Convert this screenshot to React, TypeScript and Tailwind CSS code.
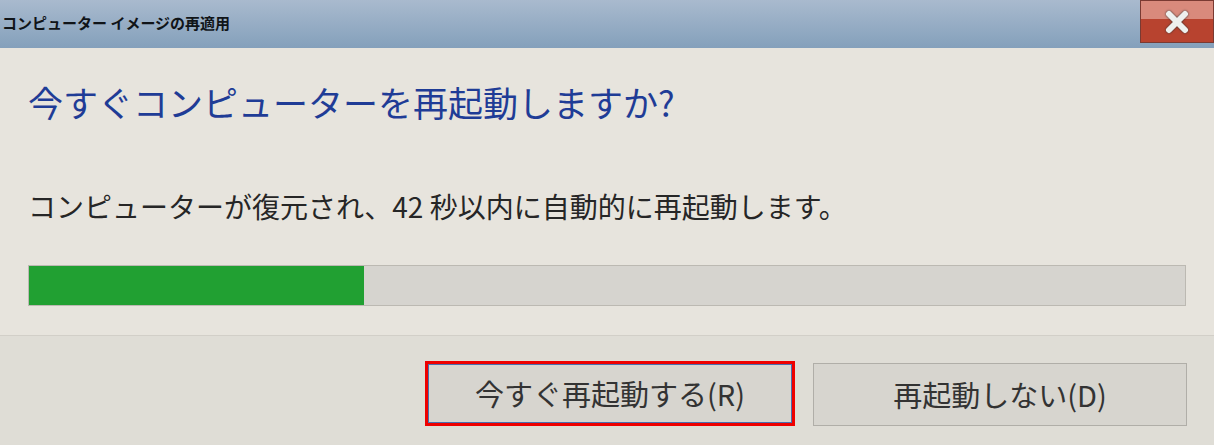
import { X } from "lucide-react";

const jp = "font-['Noto_Sans_CJK_JP',sans-serif]";

function TitleBar() {
  return (
    <div className="flex h-[48px] shrink-0 items-start justify-between bg-gradient-to-b from-[#a9bace] to-[#84a0bb]">
      <div className={`${jp} pl-[2px] pt-[13px] text-[15px] font-bold leading-[20px] text-[#101418]`}>
        コンピューター イメージの再適用
      </div>
      <div className="flex h-[43px] w-[74px] items-center justify-center border border-[#7a3a32] bg-gradient-to-b from-[#d98a7c] from-45% to-[#b8432f] to-45%">
        <X className="h-[32px] w-[32px] text-[#eef0ee] drop-shadow-[0_0_1px_#333]" strokeWidth={4.5} />
      </div>
    </div>
  );
}

export default function App() {
  const progress = 29;
  return (
    <div className={`${jp} flex h-[445px] w-[1214px] flex-col overflow-hidden bg-[#e7e4dd]`}>
      <TitleBar />
      <div className="flex flex-1 flex-col px-[28px] pt-[33px]">
        <h1 className="text-[35px] leading-[42px] text-[#1f3c96]">
          今すぐコンピューターを再起動しますか?
        </h1>
        <p className="mt-[66px] text-[28px] leading-[34px] text-[#262626]">
          コンピューターが復元され、42 秒以内に自動的に再起動します。
        </p>
        <div className="mt-[42px] h-[41px] w-full border border-[#bcb9b2] bg-[#d6d4cf]">
          <div className="h-full bg-[#21a032]" style={{ width: `${progress}%` }} />
        </div>
      </div>
      <div className="flex h-[110px] shrink-0 items-start justify-end gap-[18px] border-t border-[#d2cfc8] bg-[#dfddd6] pr-[27px] pt-[25px]">
        <button className="h-[65px] w-[370px] border-[3px] border-[#ee0000] bg-[#d7d5cf] p-0">
          <div className="flex h-full w-full items-center justify-center border border-[#4a6fb0] text-[29px] text-[#333]">
            今すぐ再起動する(R)
          </div>
        </button>
        <button className="mt-[2px] flex h-[63px] w-[374px] items-center justify-center border border-[#b0aea8] bg-[#d7d5cf] text-[29px] text-[#333]">
          再起動しない(D)
        </button>
      </div>
    </div>
  );
}
